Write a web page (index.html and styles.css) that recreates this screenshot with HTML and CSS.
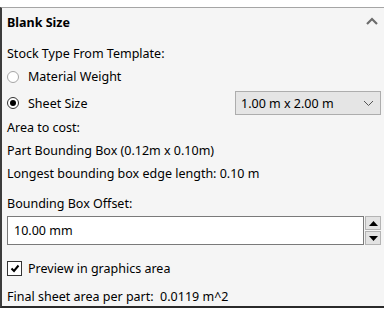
FILE: index.html
```html
<!DOCTYPE html>
<html>
  <head>
    <link rel="stylesheet" href="styles.css">
  </head>
  <body>
    <div class="panel">
      <div class="panel-head">
        <h2>Blank Size</h2>
        <svg class="collapse" width="12" height="8" viewBox="0 0 12 8">
          <path d="M1 7 L6 2 L11 7" fill="none" stroke="#6d6d6d" stroke-width="2.2" />
        </svg>
      </div>

      <div class="panel-body">
        <div class="row label first">Stock Type From Template:</div>

        <div class="row radio-row">
          <span class="radio"></span>
          <span>Material Weight</span>
        </div>

        <div class="row radio-row sheet-row">
          <span class="radio checked"></span>
          <span class="grow">Sheet Size</span>
          <div class="select">
            <span>1.00 m x 2.00 m</span>
            <svg width="11" height="7" viewBox="0 0 11 7">
              <path d="M1 1 L5.5 5.5 L10 1" fill="none" stroke="#555" stroke-width="1" />
            </svg>
          </div>
        </div>

        <div class="row label">Area to cost:</div>
        <div class="row label">Part Bounding Box (0.12m x 0.10m)</div>
        <div class="row label">Longest bounding box edge length: 0.10 m</div>

        <div class="row label offset-label">Bounding Box Offset:</div>
        <div class="spin-field">
          <div class="input">10.00 mm</div>
          <div class="spin">
            <div class="spin-btn">
              <svg width="9" height="5" viewBox="0 0 9 5"><path d="M0 5 L4.5 0 L9 5 Z" fill="#000" /></svg>
            </div>
            <div class="spin-btn">
              <svg width="9" height="5" viewBox="0 0 9 5"><path d="M0 0 L4.5 5 L9 0 Z" fill="#000" /></svg>
            </div>
          </div>
        </div>

        <div class="row check-row">
          <span class="checkbox">
            <svg width="10" height="9" viewBox="0 0 10 9">
              <path d="M1.5 4.5 L4 7 L8.5 1.5" fill="none" stroke="#000" stroke-width="2" />
            </svg>
          </span>
          <span>Preview in graphics area</span>
        </div>

        <div class="row label final">Final sheet area per part:&nbsp; 0.0119 m^2</div>
      </div>
    </div>
  </body>
</html>
```

FILE: styles.css
```css
body {
  margin: 0;
  padding: 0;
  background-color: #fff;
  font-family: "Noto Sans", "Open Sans", sans-serif;
  font-size: 12.5px;
  color: #000;
}

.panel {
  margin-top: 7px;
  background-color: #f5f5f5;
  border-top: 1px solid #a5a5a5;
  border-left: 2px solid #3c3c3c;
  border-bottom: 2px solid #2a2a2a;
  height: 301px;
  box-sizing: border-box;
  overflow: hidden;
}

.panel-head {
  display: flex;
  align-items: center;
  justify-content: space-between;
  height: 28px;
  padding: 0 6px 0 5px;
}

h2 {
  margin: 0;
  font-size: 12.5px;
  font-weight: bold;
}

.collapse {
  margin-top: -2px;
}

.panel-body {
  padding: 0 3px 0 5px;
}

.row {
  display: flex;
  align-items: center;
  height: 23px;
}

.first {
  margin-top: 6px;
}

.radio-row {
  gap: 9px;
}

.sheet-row {
  height: 26px;
  margin-top: 2px;
}

.grow {
  flex: 1;
}

.radio {
  width: 12px;
  height: 12px;
  border: 1px solid #a5a5a5;
  border-radius: 50%;
  background: #fff;
  box-sizing: border-box;
  position: relative;
}

.radio.checked {
  border-color: #333;
}

.radio.checked::after {
  content: "";
  position: absolute;
  left: 2px;
  top: 2px;
  width: 6px;
  height: 6px;
  border-radius: 50%;
  background: #000;
}

.select {
  width: 146px;
  height: 24px;
  box-sizing: border-box;
  border: 1px solid #adadad;
  background: #e5e5e5;
  display: flex;
  align-items: center;
  justify-content: space-between;
  padding: 0 6px 0 5px;
}

.offset-label {
  margin-top: 7px;
}

.spin-field {
  display: flex;
  gap: 1px;
  margin-top: 1px;
}

.input {
  flex: 1;
  height: 29px;
  box-sizing: border-box;
  border: 1px solid #7a7a7a;
  background: #fff;
  display: flex;
  align-items: center;
  padding-left: 6px;
}

.spin {
  display: flex;
  flex-direction: column;
  gap: 1px;
  width: 16px;
}

.spin-btn {
  height: 14px;
  box-sizing: border-box;
  border: 1px solid #b4b4b4;
  background: #e3e3e3;
  display: flex;
  align-items: center;
  justify-content: center;
}

.check-row {
  gap: 6px;
  margin-top: 12px;
}

.checkbox {
  width: 15px;
  height: 15px;
  box-sizing: border-box;
  border: 1px solid #333;
  background: #fff;
  display: flex;
  align-items: center;
  justify-content: center;
}

.final {
  height: 20px;
  margin-top: 6px;
}
```
